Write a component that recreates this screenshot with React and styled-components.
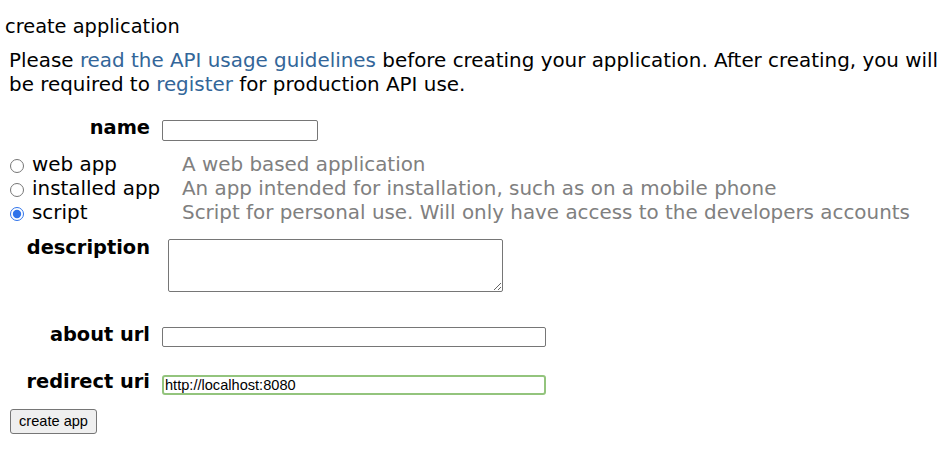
import React from 'react';
import styled, { createGlobalStyle } from 'styled-components';

const GlobalStyle = createGlobalStyle`
  body {
    margin: 0;
    background: #fff;
    color: #000;
    font-family: "DejaVu Sans", Verdana, sans-serif;
    font-size: 19.9px;
  }
`;

const Page = styled.div`
  width: 950px;
  padding-top: 15px;
`;

const Title = styled.h1`
  margin: 0 0 0 5px;
  font-size: 19.4px;
  font-weight: normal;
  line-height: 24px;
`;

const Intro = styled.p`
  margin: 10px 8px 0 9px;
  line-height: 23.5px;
`;

const Link = styled.a`
  color: #369;
  text-decoration: none;
`;

const Form = styled.form`
  display: flex;
  flex-direction: column;
  align-items: flex-start;
`;

const FieldRow = styled.div`
  display: grid;
  grid-template-columns: 150px auto;
  column-gap: 12px;
  align-items: start;
  margin-top: ${p => p.$gap}px;
`;

const Label = styled.label`
  text-align: right;
  font-size: 19.4px;
  font-weight: bold;
  line-height: 24px;
  white-space: nowrap;
`;

const TextInput = styled.input`
  box-sizing: border-box;
  width: ${p => p.$width}px;
  height: ${p => p.$height || 20}px;
  margin: ${p => p.$offset || 4}px 0 0;
  padding: 1px 1px;
  border: ${p => (p.$valid ? '2px solid #93c47d' : '1px solid #767676')};
  border-radius: ${p => (p.$valid ? 3 : 2)}px;
  font-family: "Liberation Sans", Arial, sans-serif;
  font-size: 14.6px;
  color: #000;
  outline: none;
`;

const TextArea = styled.textarea`
  box-sizing: border-box;
  width: 335px;
  height: 53px;
  margin: 3px 0 0 6px;
  border: 1px solid #767676;
  border-radius: 2px;
  font-family: "Liberation Mono", monospace;
  font-size: 14px;
`;

const RadioGroup = styled.div`
  display: grid;
  grid-template-columns: 172px auto;
  grid-auto-rows: 24px;
  margin: 12px 0 0 10px;
  line-height: 24px;
`;

const Choice = styled.label`
  display: flex;
  align-items: center;
  gap: 8px;
  white-space: nowrap;
`;

const Radio = styled.input`
  width: 14px;
  height: 14px;
  margin: 2px 0 0;
  accent-color: #2f73ea;
`;

const Hint = styled.span`
  color: #808080;
  white-space: nowrap;
`;

const SubmitButton = styled.button`
  box-sizing: border-box;
  width: 87px;
  height: 25px;
  margin: 14px 0 0 10px;
  padding: 0;
  border: 1px solid #767676;
  border-radius: 3px;
  background: #efefef;
  font-family: "Liberation Sans", Arial, sans-serif;
  font-size: 14.6px;
  color: #000;
`;

const appTypes = [
  { id: 'web', label: 'web app', hint: 'A web based application' },
  { id: 'installed', label: 'installed app', hint: 'An app intended for installation, such as on a mobile phone' },
  { id: 'script', label: 'script', hint: 'Script for personal use. Will only have access to the developers accounts' },
];

export default function App() {
  return (
    <Page>
      <GlobalStyle />
      <Title>create application</Title>
      <Intro>
        Please <Link href="#">read the API usage guidelines</Link> before creating your application. After creating, you will be required to <Link href="#">register</Link> for production API use.
      </Intro>
      <Form onSubmit={e => e.preventDefault()}>
        <FieldRow $gap={19.5}>
          <Label htmlFor="name">name</Label>
          <TextInput id="name" $width={156} $height={21} />
        </FieldRow>

        <RadioGroup>
          {appTypes.map(t => (
            <React.Fragment key={t.id}>
              <Choice>
                <Radio type="radio" name="app_type" defaultChecked={t.id === 'script'} />
                {t.label}
              </Choice>
              <Hint>{t.hint}</Hint>
            </React.Fragment>
          ))}
        </RadioGroup>

        <FieldRow $gap={11}>
          <Label htmlFor="description">description</Label>
          <TextArea id="description" />
        </FieldRow>

        <FieldRow $gap={31}>
          <Label htmlFor="about_url">about url</Label>
          <TextInput id="about_url" $width={384} $offset={4.5} />
        </FieldRow>

        <FieldRow $gap={22.5}>
          <Label htmlFor="redirect_uri">redirect uri</Label>
          <TextInput id="redirect_uri" $width={384} $offset={5} $valid defaultValue="http://localhost:8080" />
        </FieldRow>

        <SubmitButton type="submit">create app</SubmitButton>
      </Form>
    </Page>
  );
}
